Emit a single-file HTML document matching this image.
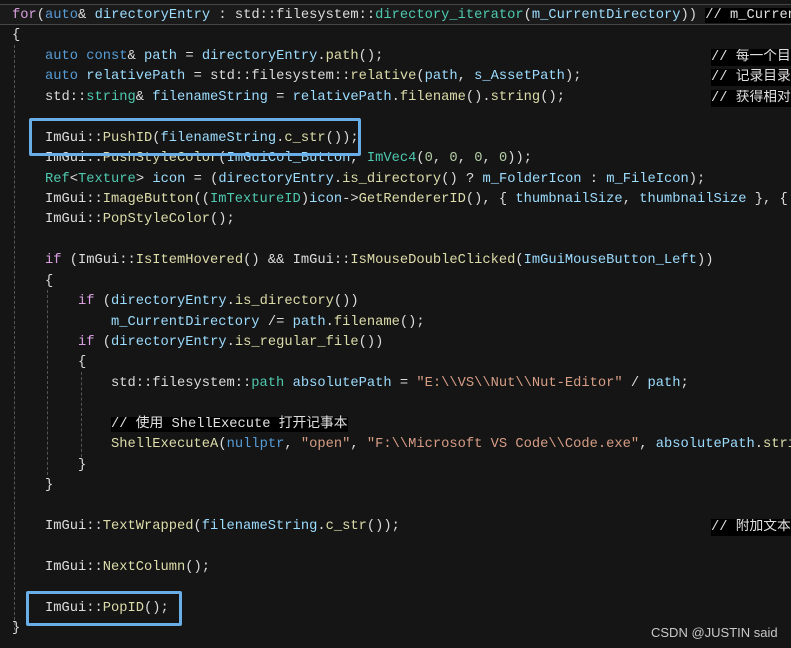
<!DOCTYPE html>
<html><head><meta charset="utf-8"><style>
html,body{margin:0;padding:0;background:#151515;width:791px;height:648px;overflow:hidden}
.wrap{position:relative;width:791px;height:648px;background:#151515;overflow:hidden}
.code{position:absolute;left:12px;top:6px;width:779px;overflow:hidden;font-family:"Liberation Mono","Noto Sans CJK SC",monospace;font-size:13.75px;line-height:20.43px;color:#dcdcdc;white-space:pre;letter-spacing:0}
.k{color:#569cd6}.c{color:#d8a0df}.v{color:#9cdcfe}.f{color:#dcdcaa}.t{color:#4ec9b0}.s{color:#d69d85}.n{color:#b5cea8}
.cm{color:#e0e0e0;background:#000}
.cmt{position:absolute;left:711px;height:17px;overflow:hidden;font-family:"Liberation Mono","Noto Sans CJK SC",monospace;font-size:13.75px;line-height:17px;color:#e0e0e0;background:#000;white-space:pre}
.cur{position:absolute;left:0;top:4px;width:791px;height:19px;border-top:1px solid #464646;border-bottom:1px solid #464646;background:#1a1a1a}
.box{position:absolute;border:3px solid #6aaee8;border-radius:2px}
.g{position:absolute;width:0;border-left:1px dashed #555}
.wm{position:absolute;left:651px;top:625px;font-family:"Liberation Sans",sans-serif;font-size:13px;color:#c8c8c8}
</style></head><body><div class="wrap">
<div class="cur"></div>
<div class="g" style="left:14px;top:45px;height:585px"></div>
<div class="g" style="left:47px;top:290px;height:185px"></div>
<div class="g" style="left:81px;top:372px;height:85px"></div>
<div class="code"><span class="c">for</span>(<span class="k">auto</span>&amp; <span class="v">directoryEntry</span> : std::filesystem::<span class="t">directory_iterator</span>(<span class="v">m_CurrentDirectory</span>)) <span class="cm">// m_CurrentDirectory</span>
{
    <span class="k">auto const</span>&amp; <span class="v">path</span> = <span class="v">directoryEntry</span>.<span class="f">path</span>();
    <span class="k">auto</span> <span class="v">relativePath</span> = std::filesystem::<span class="f">relative</span>(<span class="v">path</span>, <span class="v">s_AssetPath</span>);
    std::<span class="t">string</span>&amp; <span class="v">filenameString</span> = <span class="v">relativePath</span>.<span class="f">filename</span>().<span class="f">string</span>();

    ImGui::<span class="f">PushID</span>(<span class="v">filenameString</span>.<span class="f">c_str</span>());
    ImGui::<span class="f">PushStyleColor</span>(<span class="v">ImGuiCol_Button</span>, <span class="t">ImVec4</span>(<span class="n">0</span>, <span class="n">0</span>, <span class="n">0</span>, <span class="n">0</span>));
    <span class="t">Ref</span>&lt;<span class="t">Texture</span>&gt; <span class="v">icon</span> = (<span class="v">directoryEntry</span>.<span class="f">is_directory</span>() ? <span class="v">m_FolderIcon</span> : <span class="v">m_FileIcon</span>);
    ImGui::<span class="f">ImageButton</span>((<span class="t">ImTextureID</span>)<span class="v">icon</span>-&gt;<span class="f">GetRendererID</span>(), { <span class="v">thumbnailSize</span>, <span class="v">thumbnailSize</span> }, {
    ImGui::<span class="f">PopStyleColor</span>();

    <span class="c">if</span> (ImGui::<span class="f">IsItemHovered</span>() &amp;&amp; ImGui::<span class="f">IsMouseDoubleClicked</span>(<span class="v">ImGuiMouseButton_Left</span>))
    {
        <span class="c">if</span> (<span class="v">directoryEntry</span>.<span class="f">is_directory</span>())
            <span class="v">m_CurrentDirectory</span> /= <span class="v">path</span>.<span class="f">filename</span>();
        <span class="c">if</span> (<span class="v">directoryEntry</span>.<span class="f">is_regular_file</span>())
        {
            std::filesystem::<span class="t">path</span> <span class="v">absolutePath</span> = <span class="s">"E:\\VS\\Nut\\Nut-Editor"</span> / <span class="v">path</span>;

            <span class="cm">// 使用 ShellExecute 打开记事本</span>
            <span class="f">ShellExecuteA</span>(<span class="k">nullptr</span>, <span class="s">"open"</span>, <span class="s">"F:\\Microsoft VS Code\\Code.exe"</span>, <span class="v">absolutePath</span>.<span class="f">string</span>
        }
    }

    ImGui::<span class="f">TextWrapped</span>(<span class="v">filenameString</span>.<span class="f">c_str</span>());

    ImGui::<span class="f">NextColumn</span>();

    ImGui::<span class="f">PopID</span>();
}</div>
<div class="cmt" style="top:49px">// 每一个目录</div>
<div class="cmt" style="top:69px">// 记录目录</div>
<div class="cmt" style="top:90px">// 获得相对</div>
<div class="cmt" style="top:519px">// 附加文本</div>
<div class="box" style="left:29px;top:118px;width:326px;height:32px"></div>
<div class="box" style="left:26px;top:591px;width:150px;height:29px"></div>
<div class="wm">CSDN @JUSTIN said</div>
</div></body></html>
